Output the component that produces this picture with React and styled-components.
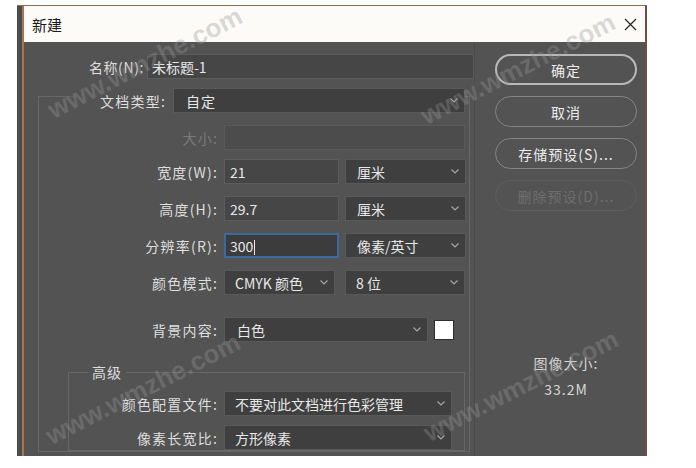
import React from 'react';
import styled, { createGlobalStyle } from 'styled-components';

const GlobalStyle = createGlobalStyle`
  body {
    margin: 0;
    background: #ffffff;
    font-family: "Noto Sans CJK SC", "Noto Sans", sans-serif;
  }
`;

const Frame = styled('div')`
  position: relative;
  box-sizing: border-box;
  width: 630px;
  height: 451px;
  margin: 5px 0 0 17px;
  padding-left: 5px;
  border-top: 1px solid #8c6a55;
  background: #4b4f4b;
`;

const Window = styled('div')`
  display: flex;
  flex-direction: column;
  height: 100%;
  border-left: 2px solid #b27150;
  border-right: 2px solid #6e4c44;
`;

const TitleBar = styled('div')`
  display: flex;
  align-items: center;
  justify-content: space-between;
  height: 36px;
  padding: 0 8px;
  background: #fdfbf8;
  color: #1c1c1c;
  font-size: 15px;
`;

const Body = styled('div')`
  display: flex;
  height: 414px;
  background: #535353;
  overflow: hidden;
`;

const LeftPanel = styled('div')`
  width: 450px;
  padding-top: 12px;
  box-sizing: border-box;
`;

const RightPanel = styled('div')`
  display: flex;
  flex-direction: column;
  gap: 11px;
  width: 171px;
  padding: 12px 0 0 20px;
  box-sizing: border-box;
  border-left: 1px solid #4a4a4a;
`;

const Row = styled('div')`
  display: flex;
  align-items: center;
  gap: ${p => p.$gap || 6}px;
  margin-top: ${p => p.$mt || 0}px;
`;

const Label = styled('div')`
  width: ${p => p.$w}px;
  margin-right: ${p => p.$mr || 0}px;
  flex-shrink: 0;
  text-align: right;
  font-size: 14px;
  letter-spacing: ${p => (p.$tight ? 0.6 : 1.2)}px;
  color: ${p => (p.$disabled ? '#7a7a7a' : '#dedede')};
  white-space: nowrap;
`;

const fieldLook = {
  input: 'background: #464646; border: 1px solid #5c5c5c;',
  select: 'background: #3f3f3f; border: 1px solid #595959;',
  disabled: 'background: #4c4c4c; border: 1px solid #5a5a5a;',
  focus: 'background: #3c3c3c; border: 2px solid #3d6a9e;',
};

const Field = styled('div')`
  box-sizing: border-box;
  display: flex;
  align-items: center;
  justify-content: space-between;
  width: ${p => p.$w}px;
  height: 25px;
  padding: 0 6px 0 ${p => p.$pl || 5}px;
  flex-shrink: 0;
  font-size: 14px;
  color: #e8e8e8;
  white-space: nowrap;
  ${p => fieldLook[p.$look || 'input']}
`;

const Caret = styled('span')`
  display: inline-block;
  width: 1px;
  height: 15px;
  margin-left: 1px;
  background: #e8e8e8;
  vertical-align: middle;
`;

const Group = styled('fieldset')`
  margin: ${p => p.$margin};
  padding: ${p => p.$padding};
  border: 1px solid #676767;
  min-width: 0;
`;

const Legend = styled('legend')`
  margin-left: ${p => p.$ml || 0}px;
  padding: ${p => p.$padding || 0};
  font-size: 14px;
  letter-spacing: 1px;
  color: #dedede;
`;

const Swatch = styled('div')`
  width: 20px;
  height: 20px;
  box-sizing: border-box;
  background: #ffffff;
  border: 1px solid #2e2e2e;
`;

const PillButton = styled('div')`
  box-sizing: border-box;
  display: flex;
  align-items: center;
  justify-content: center;
  width: 142px;
  height: 31px;
  border-radius: 16px;
  font-size: 14px;
  letter-spacing: 1px;
  border: ${p => (p.$primary ? '2px solid #b9b9b9' : `1px solid ${p.$disabled ? '#5e5e5e' : '#858585'}`)};
  color: ${p => (p.$disabled ? '#6e6e6e' : '#ececec')};
`;

const SizeInfo = styled('div')`
  display: flex;
  flex-direction: column;
  align-items: center;
  gap: 6px;
  width: 142px;
  margin-top: 131px;
  font-size: 14px;
  letter-spacing: 1px;
  color: #d6d6d6;
`;

const Watermark = styled('div')`
  position: absolute;
  left: ${p => p.$x}px;
  top: ${p => p.$y}px;
  transform: translate(-50%, -50%) rotate(-27deg);
  font-family: "Liberation Sans", Arial, sans-serif;
  font-weight: bold;
  font-size: 26px;
  color: rgba(150, 150, 150, 0.35);
  white-space: nowrap;
  pointer-events: none;
`;

const Chevron = () => (
  <svg width="8" height="5" viewBox="0 0 8 5">
    <polyline points="0.5,0.5 4,4 7.5,0.5" fill="none" stroke="#a5a5a5" strokeWidth="1.2" />
  </svg>
);

const CloseIcon = () => (
  <svg width="13" height="13" viewBox="0 0 13 13">
    <path d="M1 1 L12 12 M12 1 L1 12" stroke="#2a2a2a" strokeWidth="1.3" />
  </svg>
);

const Select = ({ w, pl = 11, children }) => (
  <Field $w={w} $look="select" $pl={pl}>
    <span>{children}</span>
    <Chevron />
  </Field>
);

const App = () => (
  <Frame>
    <GlobalStyle />
    <Window>
      <TitleBar>
        <span>新建</span>
        <CloseIcon />
      </TitleBar>
      <Body>
        <LeftPanel>
          <Row $gap={3}>
            <Label $w={120} $tight>名称(N):</Label>
            <Field $w={327} $pl={4}>未标题-1</Field>
          </Row>
          <Group $margin="0 4px 0 14px" $padding="12px 4px 0 29px">
            <Legend $ml={5} $padding="9px 0 0">
              <Row $gap={7}>
                <Label $w={93}>文档类型:</Label>
                <Select w={292} pl={12}>自定</Select>
              </Row>
            </Legend>
            <Row>
              <Label $w={150} $disabled>大小:</Label>
              <Field $w={241} $look="disabled" />
            </Row>
            <Row $mt={9}>
              <Label $w={150}>宽度(W):</Label>
              <Field $w={115}>21</Field>
              <Select w={121}>厘米</Select>
            </Row>
            <Row $mt={12}>
              <Label $w={150}>高度(H):</Label>
              <Field $w={115}>29.7</Field>
              <Select w={121}>厘米</Select>
            </Row>
            <Row $mt={12}>
              <Label $w={150}>分辨率(R):</Label>
              <Field $w={115} $look="focus" $pl={4}>
                <span>300<Caret /></span>
              </Field>
              <Select w={121}>像素/英寸</Select>
            </Row>
            <Row $mt={12} $gap={10}>
              <Label $w={150} $mr={-4}>颜色模式:</Label>
              <Select w={111} pl={10}>CMYK 颜色</Select>
              <Select w={120} pl={10}>8 位</Select>
            </Row>
            <Row $mt={22}>
              <Label $w={150}>背景内容:</Label>
              <Select w={204} pl={12}>白色</Select>
              <Swatch />
            </Row>
            <Group $margin="20px 0 0 0" $padding="9px 12px 0 19px">
              <Legend $padding="0 4px">高级</Legend>
              <Row>
                <Label $w={130}>颜色配置文件:</Label>
                <Select w={228} pl={10}>不要对此文档进行色彩管理</Select>
              </Row>
              <Row $mt={9}>
                <Label $w={130}>像素长宽比:</Label>
                <Select w={228} pl={10}>方形像素</Select>
              </Row>
            </Group>
          </Group>
        </LeftPanel>
        <RightPanel>
          <PillButton $primary>确定</PillButton>
          <PillButton>取消</PillButton>
          <PillButton>存储预设(S)...</PillButton>
          <PillButton $disabled>删除预设(D)...</PillButton>
          <SizeInfo>
            <span>图像大小:</span>
            <span>33.2M</span>
          </SizeInfo>
        </RightPanel>
      </Body>
    </Window>
    <Watermark $x={128} $y={57}>www.wmzhe.com</Watermark>
    <Watermark $x={501} $y={63}>www.wmzhe.com</Watermark>
    <Watermark $x={126} $y={383}>www.wmzhe.com</Watermark>
    <Watermark $x={504} $y={380}>www.wmzhe.com</Watermark>
  </Frame>
);

export default App;
